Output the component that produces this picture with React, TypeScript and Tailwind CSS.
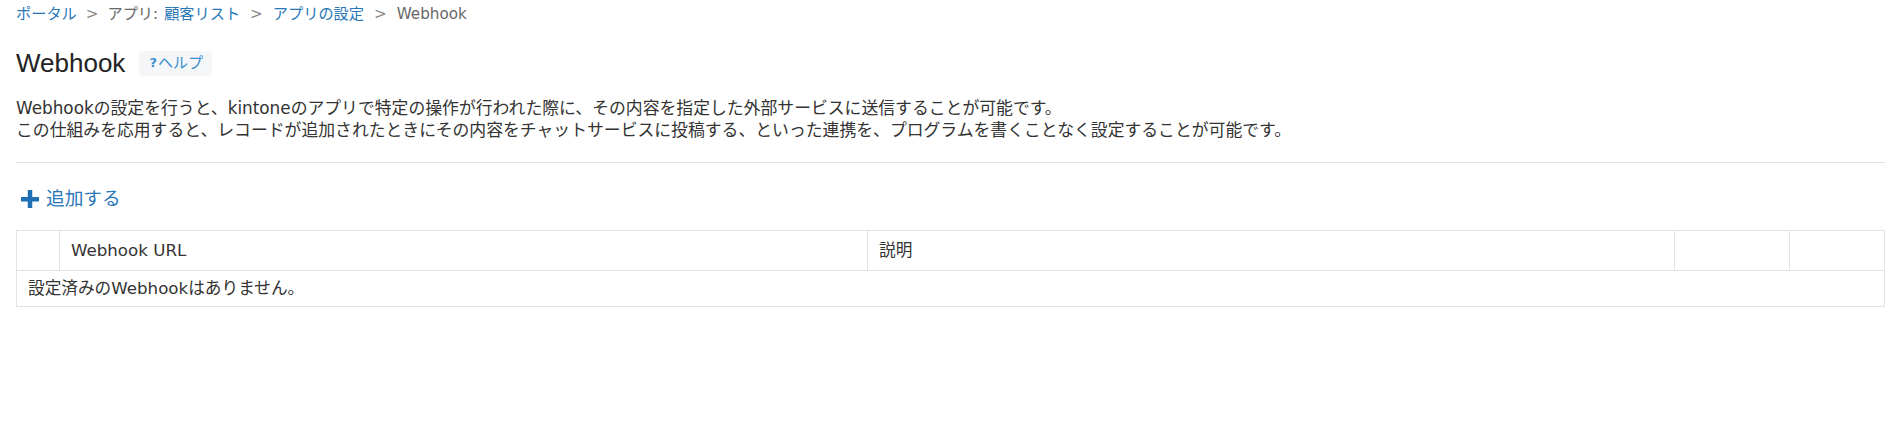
import React from "react";

const FONT = '"DejaVu Sans", "Noto Sans CJK JP", sans-serif';

function Plus() {
  return (
    <svg width="18" height="18" viewBox="0 0 18 18" className="shrink-0">
      <rect x="0" y="7" width="18" height="4.5" fill="#1f6fb2" />
      <rect x="6.75" y="0" width="4.5" height="18" fill="#1f6fb2" />
    </svg>
  );
}

export default function App() {
  return (
    <div className="min-h-[432px] bg-white px-4 text-[#333]" style={{ fontFamily: FONT }}>
      <nav className="flex h-[28px] items-center text-[15.2px] text-[#666]">
        <a className="text-[#2a78b8]">ポータル</a>
        <span className="mx-[9px] text-[#888]">&gt;</span>
        <span>アプリ: </span>
        <a className="ml-[6px] text-[#2a78b8]">顧客リスト</a>
        <span className="mx-[10px] text-[#888]">&gt;</span>
        <a className="text-[#2a78b8]">アプリの設定</a>
        <span className="mx-[10px] text-[#888]">&gt;</span>
        <span>Webhook</span>
      </nav>

      <div className="mt-[19px] flex h-[32px] items-center">
        <h1
          className="text-[26px] leading-[32px] text-[#222]"
          style={{ fontFamily: '"Liberation Sans", "Noto Sans CJK JP", sans-serif' }}
        >
          Webhook
        </h1>
        <span className="ml-[14px] flex h-[25px] items-center rounded-[3px] bg-[#f4f6f7] pl-[10px] pr-[9px] text-[15px] text-[#3a8fd0]">
          <span className="mr-[1px] text-[13px] font-bold">?</span>
          ヘルプ
        </span>
      </div>

      <div className="mt-[18px] text-[16.84px] leading-[22px]">
        <p>
          Webhookの設定を行うと、kintoneのアプリで特定の操作が行われた際に、その内容を指定した外部サービスに送信することが可能です。
        </p>
        <p>
          この仕組みを応用すると、レコードが追加されたときにその内容をチャットサービスに投稿する、といった連携を、プログラムを書くことなく設定することが可能です。
        </p>
      </div>

      <div className="mt-[21px] h-px bg-[#e3e3e3]" />

      <a className="mt-[22px] flex h-[28px] items-center pl-[5px] text-[18.7px] text-[#2a78b8]">
        <Plus />
        <span className="ml-[7px]">追加する</span>
      </a>

      <table className="mt-[17px] w-full table-fixed border-collapse text-[16.67px]">
        <colgroup>
          <col className="w-[43px]" />
          <col className="w-[808px]" />
          <col className="w-[807px]" />
          <col className="w-[115px]" />
          <col />
        </colgroup>
        <thead>
          <tr className="h-[40px]">
            <th className="border border-[#e3e3e3] p-0" />
            <th className="border border-[#e3e3e3] px-[11px] text-left font-normal">Webhook URL</th>
            <th className="border border-[#e3e3e3] px-[11px] text-left font-normal">説明</th>
            <th className="border border-[#e3e3e3] p-0" />
            <th className="border border-[#e3e3e3] p-0" />
          </tr>
        </thead>
        <tbody>
          <tr className="h-[36px]">
            <td colSpan={5} className="border border-[#e3e3e3] px-[11px]">
              設定済みのWebhookはありません。
            </td>
          </tr>
        </tbody>
      </table>
    </div>
  );
}
